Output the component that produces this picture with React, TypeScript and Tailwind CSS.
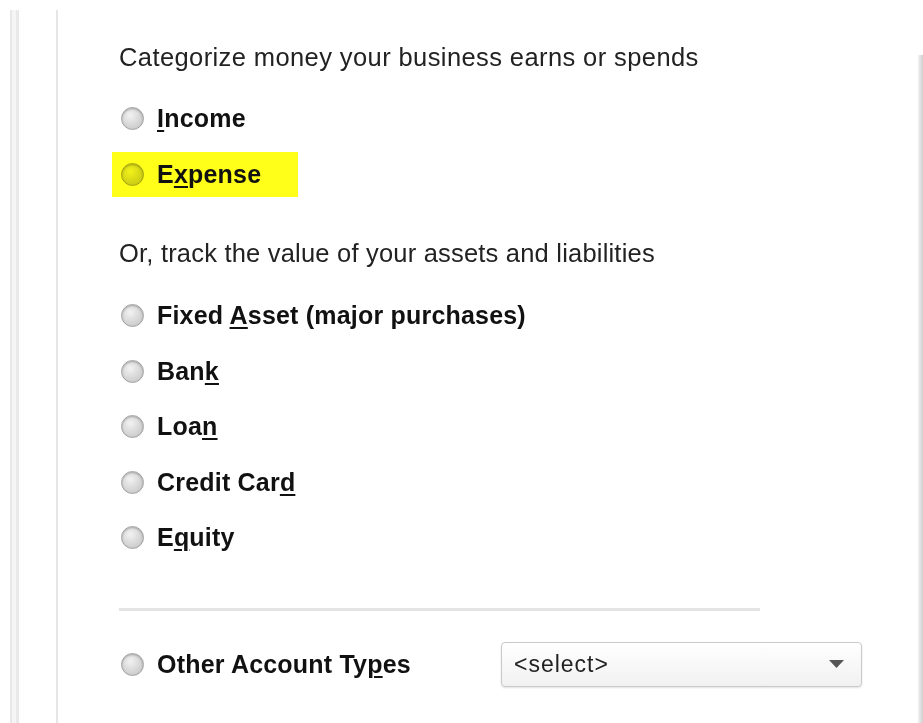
import type { ReactNode } from "react";

type Option = { id: string; label: ReactNode; highlighted?: boolean };

// letter with access-key underline
const K = ({ children }: { children: ReactNode }) => (
  <span className="underline decoration-2 underline-offset-[3px]">{children}</span>
);

const earnOptions: Option[] = [
  { id: "income", label: <><K>I</K>ncome</> },
  { id: "expense", label: <>E<K>x</K>pense</>, highlighted: true },
];

const trackOptions: Option[] = [
  { id: "fixed", label: <>Fixed <K>A</K>sset (major purchases)</> },
  { id: "bank", label: <>Ban<K>k</K></> },
  { id: "loan", label: <>Loa<K>n</K></> },
  { id: "credit", label: <>Credit Car<K>d</K></> },
  { id: "equity", label: <>E<K>q</K>uity</> },
];

function Radio({ tinted }: { tinted?: boolean }) {
  return (
    <span
      className={`inline-block w-[23px] h-[23px] shrink-0 rounded-full border border-[#a3a3a3] bg-[radial-gradient(circle_at_40%_35%,#f2f2f2,#d6d6d6_55%,#c4c4c4)] shadow-[inset_0_1px_2px_rgba(0,0,0,0.25)] ${
        tinted ? "mix-blend-multiply" : ""
      }`}
    />
  );
}

function OptionRow({ option }: { option: Option }) {
  if (option.highlighted) {
    return (
      <div className="h-[55.5px] flex items-center">
        <div className="-ml-[7px] pl-[9px] w-[186px] h-[45px] flex items-center gap-[13px] bg-[#ffff1a]">
          <Radio tinted />
          <span className="text-[25px] font-bold tracking-[0.2px] text-[#111]">{option.label}</span>
        </div>
      </div>
    );
  }
  return (
    <div className="h-[55.5px] flex items-center gap-[13px] pl-[2px]">
      <Radio />
      <span className="text-[25px] font-bold tracking-[0.2px] text-[#111]">{option.label}</span>
    </div>
  );
}

export default function App() {
  return (
    <div
      className="w-[923px] h-[723px] bg-white flex overflow-hidden"
      style={{ fontFamily: '"Liberation Sans", Arial, sans-serif' }}
    >
      {/* outer frame edges */}
      <div className="flex mt-[10px] ml-[10px]">
        <div className="w-[2px] bg-[#e8e8e8]" />
        <div className="w-[4px] bg-[#f5f5f5]" />
        <div className="w-[3px] bg-[#e9e9e9]" />
      </div>

      <div className="ml-[37px] mt-[10px] flex-1 border-l-2 border-[#e6e6e6] pl-[61px] pt-[33px] flex flex-col">
        <p className="h-[28px] leading-[28px] text-[25.5px] tracking-[0.4px] text-[#222]">
          Categorize money your business earns or spends
        </p>
        <div className="mt-[20px] flex flex-col">
          {earnOptions.map((o) => (
            <OptionRow key={o.id} option={o} />
          ))}
        </div>

        <p className="mt-[37px] h-[28px] leading-[28px] text-[25.5px] tracking-[0.2px] text-[#222]">
          Or, track the value of your assets and liabilities
        </p>
        <div className="mt-[21px] flex flex-col">
          {trackOptions.map((o) => (
            <OptionRow key={o.id} option={o} />
          ))}
        </div>

        <div className="mt-[42px] h-[3px] w-[641px] bg-[#e4e4e4]" />

        <div className="mt-[26px] h-[55.5px] flex items-center">
          <div className="w-[382px] flex items-center gap-[13px] pl-[2px]">
            <Radio />
            <span className="text-[25px] font-bold tracking-[0.2px] text-[#111]">
              Other Account Ty<K>p</K>es
            </span>
          </div>
          <div className="w-[361px] h-[45px] rounded-[4px] border border-[#c9c9c9] bg-gradient-to-b from-white to-[#f1f1f1] shadow-[0_1px_2px_rgba(0,0,0,0.12)] flex items-center justify-between pl-[12px] pr-[17px]">
            <span className="text-[23px] tracking-[1px] text-[#222]">&lt;select&gt;</span>
            <svg width="15" height="8" viewBox="0 0 15 8">
              <path d="M0 0 H15 L7.5 8 Z" fill="#555" />
            </svg>
          </div>
        </div>
      </div>

      {/* neighbouring panel edge */}
      <div className="mt-[55px] w-[5px] bg-gradient-to-r from-[#f3f3f3] to-[#cfcfcf]" />
    </div>
  );
}
